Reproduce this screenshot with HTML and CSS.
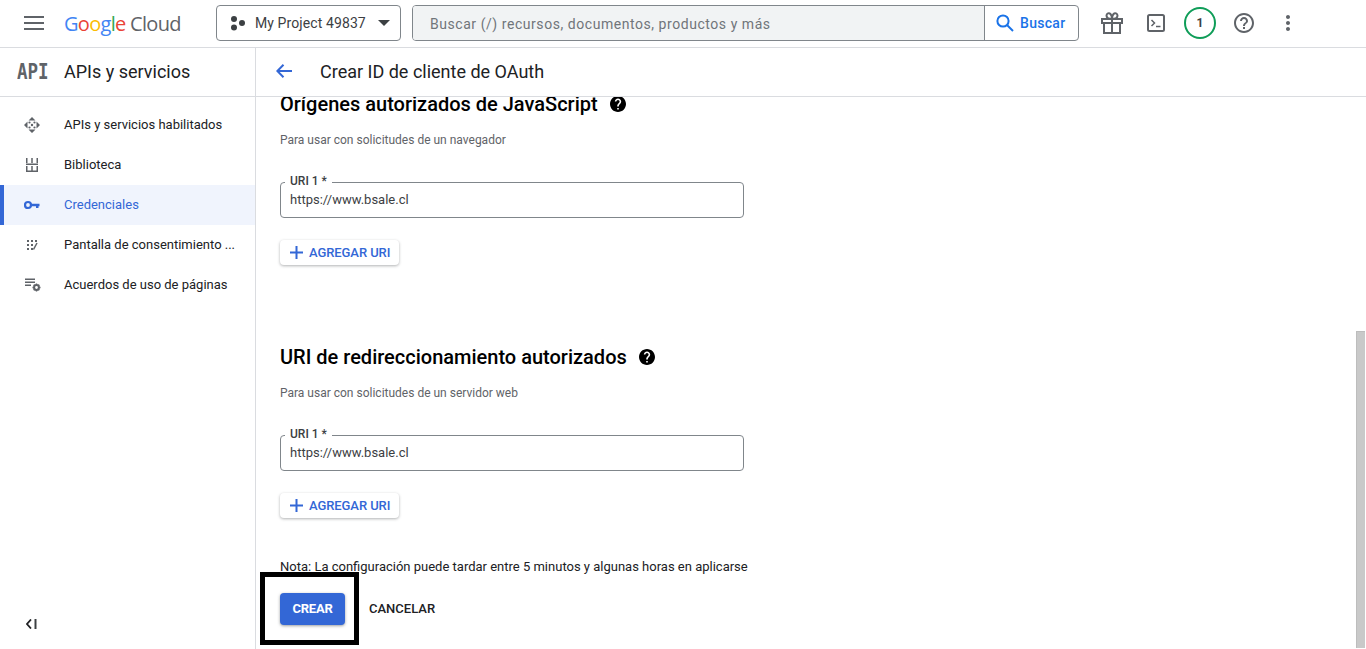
FILE: index.html
```html
<!DOCTYPE html>
<html lang="es">
<head>
<meta charset="utf-8">
<title>Crear ID de cliente de OAuth</title>
<link rel="stylesheet" href="styles.css">
</head>
<body>
<header class="topbar">
  <button class="menu-btn" aria-label="Menú">
    <svg width="20" height="14" viewBox="0 0 20 14"><path d="M0 0h20v2H0zM0 6h20v2H0zM0 12h20v2H0z" fill="#5f6368"/></svg>
  </button>
  <div class="logo"><span class="g-blue">G</span><span class="g-red">o</span><span class="g-yellow">o</span><span class="g-blue">g</span><span class="g-green">l</span><span class="g-red">e</span><span class="cloud"> Cloud</span></div>
  <button class="project">
    <svg width="16" height="16" viewBox="0 0 16 16"><circle cx="4" cy="4" r="3" fill="#3c4043"/><circle cx="12" cy="8" r="3" fill="#3c4043"/><circle cx="4" cy="12.5" r="3" fill="#3c4043"/></svg>
    <span class="project-name">My Project 49837</span>
    <svg width="12" height="6" viewBox="0 0 12 6"><path d="M0 0h12L6 6z" fill="#3c4043"/></svg>
  </button>
  <div class="search">
    <div class="search-input">Buscar (/) recursos, documentos, productos y más</div>
    <button class="search-btn">
      <svg width="18" height="18" viewBox="0 0 18 18"><circle cx="7" cy="7" r="5.6" fill="none" stroke="#1a73e8" stroke-width="2"/><path d="M11 11l6 6" stroke="#1a73e8" stroke-width="2"/></svg>
      <span>Buscar</span>
    </button>
  </div>
  <div class="top-icons">
    <span class="top-icon"><svg width="22" height="22" viewBox="0 0 22 22" fill="none" stroke="#5f6368" stroke-width="2"><path d="M1 7h20v4H1zM3 11v10h16V11M11 7v14M11 7C8 7 5.500 6 5.500 3.500 5.500 1.500 8 0.500 9.500 2 10.500 3 11 5 11 7ZM11 7c3 0 5.500-1 5.500-3.500C16.500 1.500 14 .5 12.500 2 11.500 3 11 5 11 7Z"/></svg></span>
    <span class="top-icon"><svg width="18" height="18" viewBox="0 0 18 18" fill="none"><rect x="1" y="1" width="16" height="16" rx="1.500" stroke="#5f6368" stroke-width="2"/><path d="M4.500 6l3 3-3 3" stroke="#5f6368" stroke-width="1.500"/><path d="M9 12.500h4.500" stroke="#5f6368" stroke-width="1.500"/></svg></span>
    <span class="badge">1</span>
    <span class="top-icon"><svg width="24" height="24" viewBox="0 0 24 24"><path fill="#5f6368" d="M11 18h2v-2h-2v2zm1-16C6.480 2 2 6.480 2 12s4.480 10 10 10 10-4.480 10-10S17.520 2 12 2zm0 18c-4.410 0-8-3.590-8-8s3.590-8 8-8 8 3.590 8 8-3.590 8-8 8zm0-14c-2.210 0-4 1.790-4 4h2c0-1.100.9-2 2-2s2 .9 2 2c0 2-3 1.750-3 5h2c0-2.250 3-2.500 3-5 0-2.210-1.790-4-4-4z"/></svg></span>
    <span class="top-icon"><svg width="24" height="24" viewBox="0 0 24 24"><path fill="#5f6368" d="M12 8c1.100 0 2-.9 2-2s-.9-2-2-2-2 .9-2 2 .9 2 2 2zm0 2c-1.100 0-2 .9-2 2s.9 2 2 2 2-.9 2-2-.9-2-2-2zm0 6c-1.100 0-2 .9-2 2s.9 2 2 2 2-.9 2-2-.9-2-2-2z"/></svg></span>
  </div>
</header>

<div class="layout">
  <aside class="sidebar">
    <div class="side-head">
      <span class="api-mark">API</span>
      <span class="side-title">APIs y servicios</span>
    </div>
    <nav class="side-nav">
      <a class="nav-row">
        <svg class="nav-icon" width="18" height="18" viewBox="0 0 18 18" fill="#5f6368"><path d="M9 1l3.500 3.500h-7zM9 17l-3.500-3.500h7zM1 9l3.500-3.500v7zM17 9l-3.500 3.500v-7z"/><circle cx="6.500" cy="6.500" r="1.100"/><circle cx="11.500" cy="6.500" r="1.100"/><circle cx="6.500" cy="11.500" r="1.100"/><circle cx="11.500" cy="11.500" r="1.100"/><circle cx="9" cy="9" r="1.200"/></svg>
        <span>APIs y servicios habilitados</span>
      </a>
      <a class="nav-row">
        <svg class="nav-icon" width="18" height="18" viewBox="0 0 18 18" fill="#5f6368"><path d="M3 2h1.500v5H3zM8.250 2h1.500v5h-1.500zM13.500 2H15v5h-1.500zM3 7.500h12V9H3zM3 10h1.500v4.500H3zM8.250 10h1.500v4.500h-1.500zM13.500 10H15v4.500h-1.500zM3 14.500h12V16H3z"/></svg>
        <span>Biblioteca</span>
      </a>
      <a class="nav-row active">
        <svg class="nav-icon" width="16" height="10" viewBox="0 0 16 10"><circle cx="4" cy="5" r="3" fill="none" stroke="#3367d6" stroke-width="2.200"/><path d="M6.500 3.800H15.500V6.200H14.500V8H12V6.200H6.500z" fill="#3367d6"/></svg>
        <span>Credenciales</span>
      </a>
      <a class="nav-row">
        <svg class="nav-icon" width="18" height="18" viewBox="0 0 18 18"><path d="M4 4h2v2H4zM8 4h2v2H8zM12 4h2v2h-2zM4 8h2v2H4zM8 8h2v2H8zM4 12h2v2H4zM8 12h2v2H8z" fill="#5f6368"/><path d="M10.500 13.500L14 7" stroke="#5f6368" stroke-width="1.500" fill="none"/></svg>
        <span>Pantalla de consentimiento ...</span>
      </a>
      <a class="nav-row">
        <svg class="nav-icon" width="18" height="18" viewBox="0 0 18 18"><path d="M2 2.500h10v1.500H2zM2 5.500h10V7H2zM2 8.500h6V10H2z" fill="#5f6368"/><circle cx="13.500" cy="11.500" r="2.400" fill="none" stroke="#5f6368" stroke-width="2"/><path d="M13.500 7.500v1.500M13.500 14v1.500M9.500 11.500H11M16 11.500h1.500M10.700 8.700l1 1M15.300 13.300l1 1M10.700 14.300l1-1M15.300 9.700l1-1" stroke="#5f6368" stroke-width="1.400"/></svg>
        <span>Acuerdos de uso de páginas</span>
      </a>
    </nav>
    <button class="collapse" aria-label="Contraer">
      <svg width="11" height="10" viewBox="0 0 11 10"><path d="M5 .5L1 5l4 4.500" fill="none" stroke="#202124" stroke-width="1.800"/><path d="M8.500 0h2v10h-2z" fill="#3c4043"/></svg>
    </button>
  </aside>

  <main class="main">
    <div class="page-head">
      <svg class="back" width="16" height="14" viewBox="0 0 16 14"><path d="M16 7H1.500M7.500 .8L1.300 7l6.200 6.200" fill="none" stroke="#3367d6" stroke-width="2"/></svg>
      <h1 class="page-title">Crear ID de cliente de OAuth</h1>
    </div>
    <div class="content">
      <section class="block first">
        <h2 class="block-title">Orígenes autorizados de JavaScript
          <svg class="help" width="16" height="16" viewBox="2 2 20 20"><path fill="#000" d="M12 2C6.480 2 2 6.480 2 12s4.480 10 10 10 10-4.480 10-10S17.520 2 12 2zm1 17h-2v-2h2v2zm2.070-7.750l-.9.920C13.450 12.900 13 13.500 13 15h-2v-.5c0-1.100.45-2.100 1.170-2.830l1.240-1.260c.37-.36.59-.86.59-1.410 0-1.100-.9-2-2-2s-2 .9-2 2H8c0-2.210 1.790-4 4-4s4 1.790 4 4c0 .88-.36 1.680-.93 2.250z"/></svg>
        </h2>
        <p class="block-sub">Para usar con solicitudes de un navegador</p>
        <div class="field"><span class="field-label">URI 1 *</span><span class="field-value">https://www.bsale.cl</span></div>
        <button class="add-btn"><svg width="13" height="13" viewBox="0 0 13 13"><path d="M5.500 0h2v5.500H13v2H7.500V13h-2V7.500H0v-2h5.500z" fill="#3367d6"/></svg>AGREGAR URI</button>
      </section>
      <section class="block">
        <h2 class="block-title">URI de redireccionamiento autorizados
          <svg class="help" width="16" height="16" viewBox="2 2 20 20"><path fill="#000" d="M12 2C6.480 2 2 6.480 2 12s4.480 10 10 10 10-4.480 10-10S17.520 2 12 2zm1 17h-2v-2h2v2zm2.070-7.750l-.9.920C13.450 12.900 13 13.500 13 15h-2v-.5c0-1.100.45-2.100 1.170-2.830l1.240-1.260c.37-.36.59-.86.59-1.410 0-1.100-.9-2-2-2s-2 .9-2 2H8c0-2.210 1.790-4 4-4s4 1.790 4 4c0 .88-.36 1.680-.93 2.250z"/></svg>
        </h2>
        <p class="block-sub">Para usar con solicitudes de un servidor web</p>
        <div class="field"><span class="field-label">URI 1 *</span><span class="field-value">https://www.bsale.cl</span></div>
        <button class="add-btn"><svg width="13" height="13" viewBox="0 0 13 13"><path d="M5.500 0h2v5.500H13v2H7.500V13h-2V7.500H0v-2h5.500z" fill="#3367d6"/></svg>AGREGAR URI</button>
      </section>
      <p class="note">Nota: La configuración puede tardar entre 5 minutos y algunas horas en aplicarse</p>
      <div class="actions">
        <button class="create">CREAR</button>
        <button class="cancel">CANCELAR</button>
      </div>
    </div>
    <div class="scroll-thumb"></div>
    <div class="highlight"></div>
  </main>
</div>
</body>
</html>
```
FILE: styles.css
```css
* { box-sizing: border-box; }
html, body { height: 100%; }
body {
  margin: 0;
  height: 649px;
  overflow: hidden;
  background: #fff;
  color: #202124;
  font-family: Roboto, "Liberation Sans", sans-serif;
  font-size: 13px;
  display: flex;
  flex-direction: column;
}
button { font-family: inherit; background: none; border: 0; padding: 0; }

.topbar {
  height: 48px;
  flex: none;
  display: flex;
  align-items: center;
  border-bottom: 1px solid #dadce0;
  padding-bottom: 1px;
}
.menu-btn { width: 20px; height: 14px; margin-left: 24px; display: flex; }
.logo {
  margin-left: 20px;
  width: 131px;
  font-family: "Open Sans", sans-serif;
  font-size: 20px;
  letter-spacing: -0.7px;
  white-space: pre;
}
.g-blue { color: #4285f4; }
.g-red { color: #ea4335; }
.g-yellow { color: #fbbc04; }
.g-green { color: #34a853; }
.cloud { color: #5f6368; }

.project {
  margin-left: 21px;
  width: 185px;
  height: 36px;
  border: 1px solid #80868b;
  border-radius: 4px;
  display: flex;
  align-items: center;
  padding-left: 13px;
  color: #3c4043;
  font-size: 14px;
}
.project-name { margin-left: 9px; margin-right: 12px; white-space: nowrap; letter-spacing: .1px; }

.search {
  margin-left: 11px;
  width: 667px;
  height: 36px;
  border: 1px solid #80868b;
  border-radius: 4px;
  display: flex;
  overflow: hidden;
}
.search-input {
  flex: 1;
  background: #f1f3f4;
  color: #70757a;
  font-size: 14px;
  letter-spacing: .55px;
  line-height: 34px;
  padding: 1px 0 0 17px;
}
.search-btn {
  width: 94px;
  border-left: 1px solid #80868b;
  display: flex;
  align-items: center;
  gap: 6px;
  padding-left: 11px;
  color: #1a73e8;
  font-size: 14px;
  font-weight: 500;
  letter-spacing: .3px;
}
.top-icons { display: flex; align-items: center; margin-left: 11px; }
.top-icon { width: 44px; height: 32px; display: flex; align-items: center; justify-content: center; }
.badge {
  width: 32px;
  height: 32px;
  margin: 0 6px;
  border: 2px solid #0f9d58;
  border-radius: 50%;
  display: flex;
  align-items: center;
  justify-content: center;
  font-size: 12px;
  font-weight: 700;
  color: #3c4043;
}

.layout { flex: 1; display: flex; min-height: 0; }

.sidebar {
  width: 256px;
  flex: none;
  border-right: 1px solid #dadce0;
  display: flex;
  flex-direction: column;
}
.side-head {
  height: 49px;
  flex: none;
  display: flex;
  align-items: center;
  border-bottom: 1px solid #dadce0;
  padding: 0 0 2px 17px;
}
.api-mark {
  display: inline-block;
  width: 47px;
  font-family: "DejaVu Sans Mono", monospace;
  font-size: 17.5px;
  font-weight: 700;
  color: #5f6368;
  transform: scaleY(1.25);
}
.side-title { font-size: 18px; color: #202124; }
.side-nav { padding-top: 8px; }
.nav-row {
  height: 40px;
  display: flex;
  align-items: center;
  position: relative;
  padding: 0 0 2px 64px;
  color: #202124;
  font-size: 13px;
}
.nav-icon { position: absolute; left: 32px; top: 50%; transform: translate(-50%, -50%); }
.nav-row.active { background: #f0f4fd; color: #3367d6; box-shadow: inset 4px 0 0 #3367d6; }
.collapse {
  margin-top: auto;
  margin-bottom: 20px;
  margin-left: 26px;
  width: 11px;
  height: 10px;
  display: flex;
}

.main { flex: 1; min-width: 0; position: relative; display: flex; flex-direction: column; overflow: hidden; }
.page-head {
  height: 49px;
  flex: none;
  display: flex;
  align-items: center;
  border-bottom: 1px solid #dadce0;
  padding: 0 0 2px 20px;
  gap: 28px;
  background: #fff;
  position: relative;
  z-index: 1;
}
.page-title { margin: 0; font-size: 18px; font-weight: 400; color: #202124; }

.content { padding-left: 24px; }
.block { margin-bottom: 80px; }
.block.first { margin-top: -5px; }
.block:not(.first) { margin-bottom: 41px; }
.block-title {
  margin: 0;
  font-size: 20px;
  line-height: 24px;
  font-weight: 500;
  color: #000;
  display: flex;
  align-items: center;
  gap: 12px;
}
.help { flex: none; }
.block-sub {
  margin: 16px 0 34px;
  font-size: 12px;
  line-height: 16px;
  color: #5f6368;
}
.field {
  position: relative;
  width: 464px;
  height: 36px;
  border: 1px solid #80868b;
  border-radius: 4px;
  padding: 0 0 2px 9px;
  display: flex;
  align-items: center;
}
.field-label {
  position: absolute;
  left: 4px;
  top: -8px;
  padding: 0 5px;
  background: #fff;
  font-size: 12px;
  line-height: 13px;
  color: #3c4043;
  font-weight: 500;
}
.field-value { font-size: 13px; color: #3c4043; }
.add-btn {
  margin-top: 22px;
  width: 119px;
  height: 25px;
  background: #fff;
  border-radius: 4px;
  box-shadow: 0 1px 3px rgba(60,64,67,.4);
  display: flex;
  align-items: center;
  padding-left: 10px;
  gap: 6px;
  color: #3367d6;
  font-size: 13px;
  font-weight: 500;
  letter-spacing: -.08px;
}
.note { margin: 0 0 18px; font-size: 13px; line-height: 16px; color: #202124; }
.actions { display: flex; align-items: center; gap: 24px; }
.create {
  width: 65px;
  height: 32px;
  padding-bottom: 2px;
  background: #3367d6;
  border-radius: 4px;
  box-shadow: 0 1px 3px rgba(60,64,67,.5);
  color: #fff;
  font-size: 13px;
  font-weight: 700;
  letter-spacing: -.2px;
}
.cancel { padding-bottom: 2px; font-size: 13px; font-weight: 500; color: #202124; }
.scroll-thumb {
  position: absolute;
  right: 1px;
  top: 283px;
  width: 9px;
  height: 317px;
  background: #c9c9c9;
  border-left: 1px solid #bdbdbd;
  border-top: 1px solid #bdbdbd;
}
.highlight {
  position: absolute;
  left: 4px;
  top: 524px;
  width: 99px;
  height: 73px;
  border: 5px solid #000;
}
```
